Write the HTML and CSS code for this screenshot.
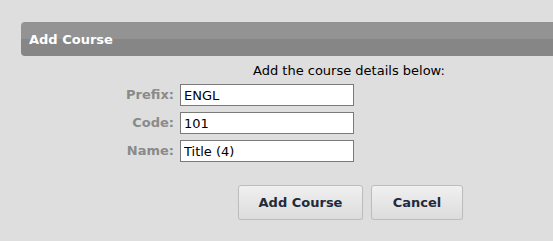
FILE: index.html
```html
<!DOCTYPE html>
<html lang="en">
<head>
    <meta charset="UTF-8">
    <title>Add Course</title>
    <link rel="stylesheet" href="styles.css">
</head>
<body>
    <div class="dialog">
        <div class="dialog-title">Add Course</div>
        <div class="dialog-body">
            <p class="intro">Add the course details below:</p>
            <div class="fields">
                <label for="prefix">Prefix:</label>
                <input type="text" id="prefix" value="ENGL">
                <label for="code">Code:</label>
                <input type="text" id="code" value="101">
                <label for="name">Name:</label>
                <input type="text" id="name" value="Title (4)">
            </div>
            <div class="actions">
                <button class="btn btn-add">Add Course</button>
                <button class="btn btn-cancel">Cancel</button>
            </div>
        </div>
    </div>
</body>
</html>
```

FILE: styles.css
```css
body {
    margin: 0;
    padding: 22px 0 0 21px;
    background-color: #dedede;
    font-family: 'DejaVu Sans', Verdana, sans-serif;
    font-size: 13px;
    color: #000;
}
.dialog-title {
    height: 34px;
    line-height: 35px;
    padding-left: 8px;
    background: linear-gradient(#939393 0, #939393 50%, #868686 50%, #868686 100%);
    border-radius: 4px 0 0 4px;
    color: #fff;
    font-weight: bold;
}
.intro {
    margin: 7px 0 0 232px;
    line-height: 16px;
}
.fields {
    display: grid;
    grid-template-columns: 153px 174px;
    column-gap: 6px;
    row-gap: 6px;
    margin-top: 5px;
}
.fields label {
    text-align: right;
    font-weight: bold;
    color: #8a8a8a;
    line-height: 22px;
}
.fields input {
    box-sizing: border-box;
    width: 174px;
    height: 22px;
    margin: 0;
    padding: 1px 3px 0;
    border: 1px solid #7a7a7a;
    background-color: #fff;
    font-family: inherit;
    font-size: 13px;
    color: #000;
    outline: none;
}
.actions {
    display: flex;
    gap: 8px;
    margin: 23px 0 0 217px;
}
.btn {
    height: 35px;
    border: 1px solid #bdbdbd;
    border-radius: 3px;
    background: linear-gradient(#f0f0f0, #dcdcdc);
    box-shadow: 0 1px 1px rgba(0, 0, 0, 0.08);
    font-family: inherit;
    font-size: 13px;
    font-weight: bold;
    color: #1f2b3b;
    cursor: pointer;
}
.btn-add {
    width: 125px;
}
.btn-cancel {
    width: 92px;
}
```
